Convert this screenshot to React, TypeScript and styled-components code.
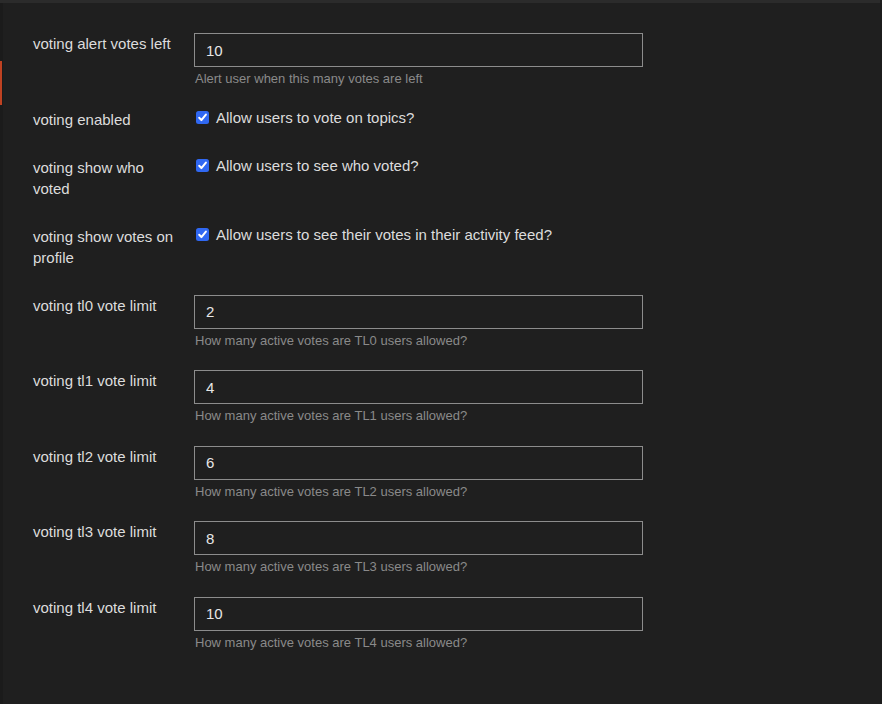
import React from "react";
import styled, { createGlobalStyle } from "styled-components";

const Global = createGlobalStyle`
  html, body { margin: 0; padding: 0; background: #1f1f1f; }
  body { font-family: "Liberation Sans", Arial, Helvetica, sans-serif; color: #dcdcdc; }
  * { box-sizing: border-box; }
`;

const Page = styled.div`
  width: 882px;
  height: 704px;
  display: flex;
  flex-direction: column;
  background: #1f1f1f;
  overflow: hidden;
`;

const TopBar = styled.div`
  height: 3px;
  flex: none;
  display: flex;
`;

const TopBarFill = styled.div`
  flex: 1;
  background: #2b2b2b;
`;

const TopBarEnd = styled.div`
  width: 2px;
  background: #1f1f1f;
`;

const Body = styled.div`
  flex: 1;
  display: flex;
  min-height: 0;
`;

const SideStrip = styled.div`
  width: 3px;
  flex: none;
  background: #1b1b1b;
  display: flex;
  flex-direction: column;
  padding-top: 58px;
`;

const ActiveMark = styled.div`
  width: 2px;
  height: 44px;
  background: #bf4222;
`;

const Content = styled.div`
  flex: 1;
  padding: 30px 0 0 30px;
  display: flex;
  flex-direction: column;
`;

const RightStrip = styled.div`
  width: 2px;
  flex: none;
  background: #1c1c1c;
`;

const Row = styled.div<{ $kind: "input" | "check" }>`
  display: flex;
  align-items: flex-start;
  padding-bottom: ${(p) => (p.$kind === "input" ? "21.5px" : "27px")};
`;

const Label = styled.div`
  width: 148px;
  margin-right: 13px;
  font-size: 15px;
  line-height: 21px;
  color: #dcdcdc;
  flex: none;
`;

const Control = styled.div`
  display: flex;
  flex-direction: column;
`;

const TextInput = styled.input`
  width: 449px;
  height: 34px;
  background: #1f1f1f;
  border: 1px solid #8c8c8c;
  border-radius: 0;
  padding: 0 0 0 11px;
  font-family: "Liberation Sans", Arial, Helvetica, sans-serif;
  font-size: 15px;
  color: #e6e6e6;
  outline: none;
  margin: 0;
`;

const Help = styled.div`
  margin-top: 3px;
  font-size: 13px;
  line-height: 17px;
  color: #8a8a8a;
  padding-left: 1px;
`;

const CheckLine = styled.label`
  display: flex;
  align-items: center;
  height: 17px;
  font-size: 15px;
  color: #dcdcdc;
  padding-left: 2px;
`;

const BoxWrap = styled.span`
  position: relative;
  width: 13px;
  height: 13px;
  margin-right: 7px;
  flex: none;
`;

const Box = styled.input`
  appearance: none;
  -webkit-appearance: none;
  margin: 0;
  width: 13px;
  height: 13px;
  border-radius: 2.5px;
  background: #3068f2;
  display: block;
`;

const Tick = styled.svg`
  position: absolute;
  left: 0;
  top: 0;
  pointer-events: none;
`;

const Checkbox = () => (
  <BoxWrap>
    <Box type="checkbox" defaultChecked />
    <Tick width="13" height="13" viewBox="0 0 13 13">
      <path d="M3.2 6.8 L5.4 9.1 L9.9 3.6" fill="none" stroke="#fff" strokeWidth="2" strokeLinecap="round" strokeLinejoin="round" />
    </Tick>
  </BoxWrap>
);

type Setting =
  | { kind: "input"; label: string; value: string; help: string }
  | { kind: "check"; label: string; text: string };

const settings: Setting[] = [
  { kind: "input", label: "voting alert votes left", value: "10", help: "Alert user when this many votes are left" },
  { kind: "check", label: "voting enabled", text: "Allow users to vote on topics?" },
  { kind: "check", label: "voting show who voted", text: "Allow users to see who voted?" },
  { kind: "check", label: "voting show votes on profile", text: "Allow users to see their votes in their activity feed?" },
  { kind: "input", label: "voting tl0 vote limit", value: "2", help: "How many active votes are TL0 users allowed?" },
  { kind: "input", label: "voting tl1 vote limit", value: "4", help: "How many active votes are TL1 users allowed?" },
  { kind: "input", label: "voting tl2 vote limit", value: "6", help: "How many active votes are TL2 users allowed?" },
  { kind: "input", label: "voting tl3 vote limit", value: "8", help: "How many active votes are TL3 users allowed?" },
  { kind: "input", label: "voting tl4 vote limit", value: "10", help: "How many active votes are TL4 users allowed?" },
];

export default function App() {
  return (
    <Page>
      <Global />
      <TopBar>
        <TopBarFill />
        <TopBarEnd />
      </TopBar>
      <Body>
        <SideStrip>
          <ActiveMark />
        </SideStrip>
        <Content>
          {settings.map((s) => (
            <Row key={s.label} $kind={s.kind}>
              <Label>{s.label}</Label>
              <Control>
                {s.kind === "input" ? (
                  <>
                    <TextInput defaultValue={s.value} />
                    <Help>{s.help}</Help>
                  </>
                ) : (
                  <CheckLine>
                    <Checkbox />
                    {s.text}
                  </CheckLine>
                )}
              </Control>
            </Row>
          ))}
        </Content>
        <RightStrip />
      </Body>
    </Page>
  );
}
